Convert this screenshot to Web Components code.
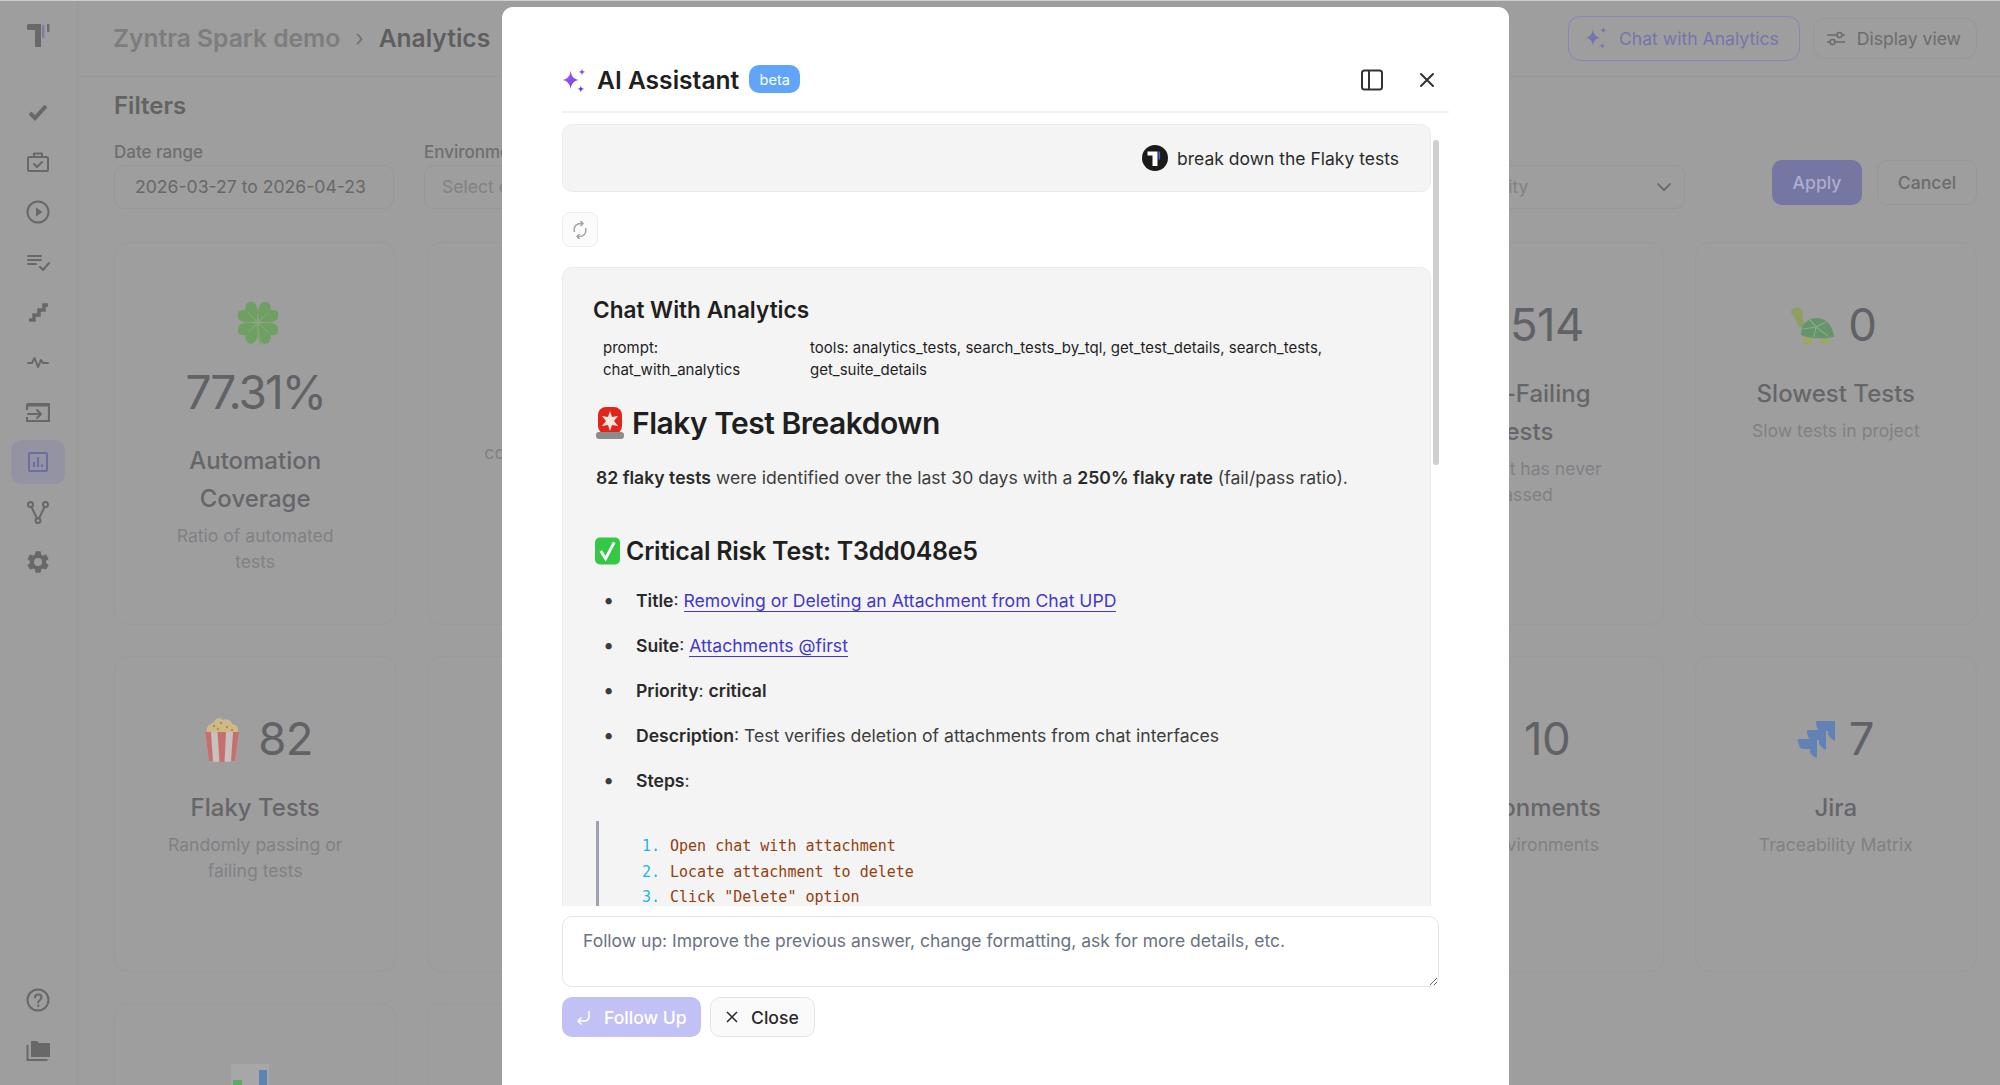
<!DOCTYPE html>
<html lang="en">
<head>
<meta charset="utf-8">
<title>Analytics</title>
<style>
    html, body { margin: 0; height: 100%; background: #9e9e9e; overflow: hidden; }
    body { font-family: Inter, "Liberation Sans", sans-serif; }
</style>
</head>
<body>
<app-shell>
    <side-rail slot="rail"></side-rail>
    <top-bar slot="top"></top-bar>
    <filter-bar slot="filters"></filter-bar>
    <stat-grid slot="content">
        <stat-card value="77.31%" stacked label="Automation Coverage" note="Ratio of automated tests">
            <svg slot="icon" style="margin-left:5px" width="40" height="43" viewBox="-16 -16.500 32 34.500">
                <g fill="#6f9f62">
                    <path d="M0 0C-3-3-9-6-9-12-9-17-3-18 0-13 3-18 9-17 9-12 9-6 3-3 0 0Z" transform="rotate(45) translate(0 -1)"/>
                    <path d="M0 0C-3-3-9-6-9-12-9-17-3-18 0-13 3-18 9-17 9-12 9-6 3-3 0 0Z" transform="rotate(135) translate(0 -1)"/>
                    <path d="M0 0C-3-3-9-6-9-12-9-17-3-18 0-13 3-18 9-17 9-12 9-6 3-3 0 0Z" transform="rotate(225) translate(0 -1)"/>
                    <path d="M0 0C-3-3-9-6-9-12-9-17-3-18 0-13 3-18 9-17 9-12 9-6 3-3 0 0Z" transform="rotate(315) translate(0 -1)"/>
                </g>
                <path d="M0 1C0 8 0 13 2.500 17.500" fill="none" stroke="#7fa86c" stroke-width="1.800" stroke-linecap="round"/>
                <path d="M-8-8 0 0 8-8M-8 8 0 0 8 8" fill="none" stroke="#88b277" stroke-width=".8"/>
            </svg>
        </stat-card>
        <stat-card note="covered by automation"></stat-card>
        <stat-card></stat-card>
        <stat-card></stat-card>
        <stat-card nudge value="514" label="Ever-Failing Tests" note="Test that has never passed">
            <svg slot="icon" width="40" height="40" viewBox="0 0 40 40"><circle cx="20" cy="20" r="17" fill="#a07070"/></svg>
        </stat-card>
        <stat-card nudge value="0" label="Slowest Tests" note="Slow tests in project">
            <svg slot="icon" width="44" height="37" viewBox="0 0 44 37">
                <ellipse cx="7" cy="5" rx="6" ry="4.500" fill="#8f9f62"/>
                <path d="M3 7 12 7 16 22 9 20Z" fill="#8f9f62"/>
                <rect x="13" y="26" width="9" height="11" rx="1.500" fill="#9aa768"/>
                <rect x="31" y="27" width="8" height="10" rx="1.500" fill="#9aa768"/>
                <path d="M11 28C11 16 19 11 27 11 37 11 43 20 44 30 33 32 20 32 11 28Z" fill="#67946c"/>
                <path d="M20 13 26 20 36 15M26 20 24 30M26 20 38 29M13 22 26 20" fill="none" stroke="#84ad85" stroke-width="1.200"/>
            </svg>
        </stat-card>
        <stat-card value="82" label="Flaky Tests" note="Randomly passing or failing tests">
            <svg slot="icon" style="margin:0 5px 0 8px" width="34" height="45" viewBox="0 0 34 45">
                <path d="M2 15C0 8 7 7 9 5 11 0 16 0 18 3 22 1 27 4 27 7 32 8 35 11 32 16Z" fill="#cdb98a"/>
                <g fill="#b7913f"><circle cx="9" cy="9" r="1.300"/><circle cx="16" cy="6" r="1.300"/><circle cx="22" cy="10" r="1.300"/><circle cx="27" cy="13" r="1.200"/><circle cx="13" cy="12" r="1.200"/></g>
                <path d="M0 15H34L30 44C27 45 7 45 4 44Z" fill="#c6c2bf"/>
                <path d="M0 15H6L8 44.600 4 44ZM12.500 15H21L19.500 45H14.500ZM28 15H34L30 44 26 44.600Z" fill="#c66f6f"/>
            </svg>
        </stat-card>
        <stat-card></stat-card>
        <stat-card></stat-card>
        <stat-card></stat-card>
        <stat-card nudge value="10" label="Environments" note="Test environments">
            <svg slot="icon" width="40" height="40" viewBox="0 0 40 40"><circle cx="20" cy="24" r="15" fill="#8e9fb0"/><path d="M33 8l5-2-2 5Z" fill="#c0a060"/></svg>
        </stat-card>
        <stat-card value="7" label="Jira" note="Traceability Matrix">
            <svg slot="icon" width="37" height="37" viewBox="0 0 37 37" fill="#6282b6">
                <path d="M18 0H37V20C37 20 32 18 30 13V10H23C20 10 18 6 18 0Z"/>
                <path d="M9 9H28V29C28 29 23 27 21 22V19H14C11 19 9 15 9 9Z"/>
                <path d="M0 18H19V37C19 37 14 36 12 31V28H5C2 28 0 24 0 18Z"/>
            </svg>
        </stat-card>
        <stat-card>
            <svg slot="icon" style="margin-right:10px" width="38" height="44" viewBox="0 0 38 44">
                <rect width="38" height="44" fill="#a7a7a7"/>
                <rect x="2" y="16" width="9" height="28" fill="#61a865"/>
                <rect x="28" y="6" width="8" height="38" fill="#5f83b5"/>
            </svg>
        </stat-card>
        <stat-card></stat-card>
    </stat-grid>
    <ai-modal slot="modal">
        <user-bubble>break down the Flaky tests</user-bubble>
        <retry-button></retry-button>
        <answer-card>
            <span slot="heading">Chat With Analytics</span>
            <span slot="prompt">prompt: chat_with_analytics</span>
            <span slot="tools">tools: analytics_tests, search_tests_by_tql, get_test_details, search_tests, get_suite_details</span>
            <flaky-report slot="report"></flaky-report>
        </answer-card>
    </ai-modal>
</app-shell>

<script>
const stroke = 'fill="none" stroke="currentColor" stroke-width="2" stroke-linecap="round" stroke-linejoin="round"';
const sparkle = 'M9 3C9.700 7.500 11.500 10.300 16 11 11.500 11.700 9.700 14.500 9 19 8.300 14.500 6.500 11.700 2 11 6.500 10.300 8.300 7.500 9 3Z'
    + 'M19 1C19.300 3 20 3.700 22 4 20 4.300 19.300 5 19 7 18.700 5 18 4.300 16 4 18 3.700 18.700 3 19 1Z'
    + 'M18 16C18.300 18 19 18.700 21 19 19 19.300 18.300 20 18 22 17.700 20 17 19.300 15 19 17 18.700 17.700 18 18 16Z';

class AppShell extends HTMLElement {
    constructor() {
        super();
        this.attachShadow({ mode: 'open' }).innerHTML = `
            <style>
                :host { display: flex; height: 100vh; overflow: hidden; position: relative; }
                main { flex: 1; min-width: 0; display: flex; flex-direction: column; }
                .rail { flex: none; }
                .body { flex: none; padding: 0 23px 0 36px; }
            </style>
            <div class="rail"><slot name="rail"></slot></div>
            <main>
                <slot name="top"></slot>
                <div class="body">
                    <slot name="filters"></slot>
                    <slot name="content"></slot>
                </div>
            </main>
            <slot name="modal"></slot>
        `;
    }
}

class SideRail extends HTMLElement {
    constructor() {
        super();
        const items = [
            `<path d="M4 13l5 5L20 6" fill="none" stroke="currentColor" stroke-width="4"/>`,
            `<g ${stroke}><rect x="2" y="7" width="20" height="14" rx="1.500"/><path d="M8 7V3.500h8V7M8 14l3 3 5-5"/></g>`,
            `<g ${stroke}><circle cx="12" cy="12" r="10.500"/></g><path d="M10 7.500 16.500 12 10 16.500Z" fill="currentColor"/>`,
            `<g ${stroke}><path d="M2 6h13M2 10h13M2 14h8M14 17l3 3 6-7"/></g>`,
            `<path d="M3 20h5v-5h5v-5h5V5h4" fill="none" stroke="currentColor" stroke-width="3.500"/>`,
            `<g ${stroke} stroke-width="1.600"><path d="M2 13h4l2.500-5 3.500 9 3-7 2 3h5"/></g>`,
            `<path d="M1 4h22v17H1v-4M1 10V4" fill="none" stroke="currentColor" stroke-width="2.200"/><path d="M1 5h22" stroke="currentColor" stroke-width="3"/><g ${stroke}><path d="M2 14h13M11 10l4 4-4 4"/></g>`,
            `<g fill="none" stroke="currentColor" stroke-width="2"><rect x="3" y="3" width="18" height="18" rx="1"/><path d="M8 17v-5M12 17V7M16 17v-2.500"/></g>`,
            `<g ${stroke}><circle cx="4.500" cy="4.500" r="2.500"/><circle cx="19.500" cy="4.500" r="2.500"/><circle cx="12" cy="20.500" r="2.500"/><path d="M5.500 7l5.500 11.500M18.500 7 13 18.500"/></g>`,
            `<path fill="currentColor" transform="translate(-1.400 -1.400) scale(1.120)" d="M19.140 12.940c.04-.3.06-.61.06-.94 0-.32-.02-.64-.07-.94l2.030-1.580a.49.49 0 0 0 .12-.61l-1.920-3.320a.488.488 0 0 0-.59-.22l-2.390.96c-.5-.38-1.030-.7-1.620-.94l-.36-2.540a.484.484 0 0 0-.48-.41h-3.840c-.24 0-.43.17-.47.41l-.36 2.540c-.59.24-1.130.57-1.620.94l-2.390-.96c-.22-.08-.47 0-.59.22L2.740 8.870c-.12.21-.08.47.12.61l2.030 1.580c-.05.3-.09.63-.09.94s.02.64.07.94l-2.030 1.580a.49.49 0 0 0-.12.61l1.920 3.320c.12.22.37.29.59.22l2.390-.96c.5.38 1.030.7 1.620.94l.36 2.540c.05.24.24.41.48.41h3.840c.24 0 .44-.17.47-.41l.36-2.540c.59-.24 1.130-.56 1.620-.94l2.390.96c.22.08.47 0 .59-.22l1.920-3.320c.12-.22.07-.47-.12-.61l-2.010-1.580zM12 15.600A3.600 3.600 0 1 1 12 8.400a3.600 3.600 0 0 1 0 7.200z"/>`
        ];
        const bottom = [
            `<g ${stroke}><circle cx="12" cy="12" r="10.500"/><path d="M9 9.500C9 5.500 15.500 5.500 15.500 9.500 15.500 12 12.200 12 12.200 14.500"/></g><circle cx="12.200" cy="17.800" r="1.200" fill="currentColor"/>`,
            `<path fill="currentColor" d="M5 3h6l2 2h11v14H5Z"/><path d="M1.500 7v15h20" fill="none" stroke="currentColor" stroke-width="2"/>`,
            `<circle cx="12" cy="12" r="12" fill="currentColor"/>`
        ];
        const render = (path, i) => `<div class="item ${i === 7 ? 'active' : ''}"><svg width="24" height="24" viewBox="0 0 24 24">${path}</svg></div>`;
        this.attachShadow({ mode: 'open' }).innerHTML = `
            <style>
                :host { display: flex; flex-direction: column; box-sizing: border-box; width: 78px; height: 1122px; border-right: 1px solid #999; color: #686868; }
                .logo { height: 90px; display: flex; justify-content: center; padding-top: 23px; box-sizing: border-box; margin-left: -1px; }
                .list { display: flex; flex-direction: column; gap: 6px; align-items: center; }
                .list.end { margin-top: auto; }
                .item { width: 54px; height: 44px; border-radius: 10px; display: flex; align-items: center; justify-content: center; margin-right: 1px; }
                .active { background: #9493a4; color: #6e6da0; }
            </style>
            <div class="logo">
                <svg width="24" height="26" viewBox="0 0 24 26">
                    <path d="M1 2.500Q1 1 2.500 1H15V24H9V7H2.500Q1 7 1 5.500Z" fill="#696969"/>
                    <rect x="16" y="2" width="2.500" height="13" fill="#7d7da8"/>
                    <rect x="21" y="1" width="2.500" height="8" fill="#6d6d6d"/>
                </svg>
            </div>
            <div class="list">${items.map(render).join('')}</div>
            <div class="list end">${bottom.map((p) => render(p, -1)).join('')}</div>
        `;
    }
}

class TopBar extends HTMLElement {
    constructor() {
        super();
        this.attachShadow({ mode: 'open' }).innerHTML = `
            <style>
                :host { display: flex; flex: none; align-items: center; box-sizing: border-box; height: 77px; padding: 0 23px 0 35px; border-bottom: 1px solid #999; }
                .crumb { font-size: 24.600px; font-weight: 600; color: #7d7d7d; white-space: nowrap; }
                .sep { margin: 0 15px; color: #747474; font-size: 22px; }
                .here { color: #5e5e5e; }
                .actions { margin-left: auto; display: flex; gap: 13px; align-items: center; }
                button { font: inherit; font-size: 17.6px; display: flex; align-items: center; background: none; border-radius: 12px; white-space: nowrap; }
                .chat { height: 45px; border: 1px solid #8686b6; color: #7575ad; padding: 0 20px 0 15px; gap: 11px; }
                .view { height: 41px; border: 1px solid #979797; color: #6c6c6c; padding: 0 15px 0 12px; gap: 11px; }
            </style>
            <span class="crumb">Zyntra Spark demo</span><span class="sep">›</span><span class="crumb here">Analytics</span>
            <div class="actions">
                <button class="chat"><svg width="24" height="24" viewBox="1 0 22 23"><path d="${sparkle}" fill="currentColor"/></svg>Chat with Analytics</button>
                <button class="view"><svg width="20" height="20" viewBox="0 0 20 20" fill="none" stroke="currentColor" stroke-width="1.500"><path d="M1 7h10M16 7h3M1 14h3M9 14h10"/><circle cx="13.500" cy="7" r="2.500"/><circle cx="6.500" cy="14" r="2.500"/></svg>Display view</button>
            </div>
        `;
    }
}

class FilterBar extends HTMLElement {
    constructor() {
        super();
        const caret = `<svg width="16" height="10" viewBox="0 0 16 10" fill="none" stroke="#636363" stroke-width="1.600"><path d="M1.500 1.500 8 8l6.500-6.500"/></svg>`;
        this.attachShadow({ mode: 'open' }).innerHTML = `
            <style>
                :host { display: block; color: #6c6c6c; }
                h2 { margin: 0; font-size: 24px; font-weight: 600; line-height: 30px; padding-top: 14px; color: #636363; }
                .row { display: flex; gap: 30px; align-items: flex-end; margin-top: 19px; height: 69px; }
                label { display: block; font-size: 17px; font-weight: 500; line-height: 24px; color: #6e6e6e; white-space: nowrap; }
                .field { width: 280px; flex: none; }
                .input { box-sizing: border-box; height: 44px; margin-top: 1px; padding: 0 20px; border: 1px solid #979797; border-radius: 10px; font-size: 17.6px; line-height: 42px; display: flex; align-items: center; justify-content: space-between; color: #686868; white-space: nowrap; }
                .ph { color: #828282; padding: 0 17px; }
                .end { padding: 0 12px 0 6px; }
                .gap { flex: 1; }
                .actions { display: flex; gap: 15px; margin-bottom: 4px; margin-left: 57px; }
                button { font: inherit; font-size: 17.6px; height: 45px; border-radius: 10px; box-sizing: border-box; }
                .apply { width: 90px; background: #7676a2; border: 0; color: #adadd0; font-weight: 500; }
                .cancel { width: 100px; background: none; border: 1px solid #979797; color: #6c6c6c; font-weight: 500; }
            </style>
            <h2>Filters</h2>
            <div class="row">
                <div class="field"><label>Date range</label><div class="input">2026-03-27 to 2026-04-23</div></div>
                <div class="field"><label>Environment</label><div class="input ph">Select environment</div></div>
                <div class="gap"></div>
                <div class="field"><label>Priority</label><div class="input ph end">Select priority ${caret}</div></div>
                <div class="actions"><button class="apply">Apply</button><button class="cancel">Cancel</button></div>
            </div>
        `;
    }
}

class StatGrid extends HTMLElement {
    constructor() {
        super();
        this.attachShadow({ mode: 'open' }).innerHTML = `
            <style>
                :host { display: grid; grid-template-columns: repeat(6, 1fr); grid-template-rows: 383px 316px 300px; gap: 31px; margin-top: 33px; }
            </style>
            <slot></slot>
        `;
    }
}

class StatCard extends HTMLElement {
    constructor() {
        super();
        const value = this.getAttribute('value') || '';
        const label = this.getAttribute('label') || '';
        const note = this.getAttribute('note') || '';
        const stacked = this.hasAttribute('stacked');
        const nudge = this.hasAttribute('nudge');
        this.attachShadow({ mode: 'open' }).innerHTML = `
            <style>
                :host { display: block; box-sizing: border-box; border: 1px solid #9a9a9a; border-radius: 14px; padding: 49px 48px 0; text-align: center; }
                .figure { display: flex; align-items: center; justify-content: center; gap: 14px; min-height: 66px; font-size: 45.500px; line-height: 66px; color: #616266; letter-spacing: -0.5px; }
                .figure.nudge { padding-right: 5px; }
                .figure.stacked { gap: 0; flex-direction: column; padding-top: 10px; letter-spacing: -2px; white-space: nowrap; font-size: 46px; }
                .figure.stacked span { margin-top: 14px; }
                .title { font-size: 24px; font-weight: 500; line-height: 38px; color: #65666a; margin-top: 17px; }
                .note { font-size: 17.6px; line-height: 26px; color: #808185; margin-top: 5px; }
                .note.only { margin-top: 82px; margin-left: 8px; white-space: nowrap; }
            </style>
            <div class="figure ${stacked ? 'stacked' : ''} ${nudge ? 'nudge' : ''}"><slot name="icon"></slot>${value ? `<span>${value}</span>` : ''}</div>
            ${label ? `<div class="title">${label}</div>` : ''}
            ${note ? `<div class="note ${label ? '' : 'only'}">${note}</div>` : ''}
        `;
    }
}

class AiModal extends HTMLElement {
    constructor() {
        super();
        this.attachShadow({ mode: 'open' }).innerHTML = `
            <style>
                :host { position: absolute; left: 502px; top: 7px; bottom: 0; width: 1007px; box-sizing: border-box; padding: 0 60px; background: #fff; border-radius: 11px 11px 0 0; display: flex; flex-direction: column; color: #1f1f1f; }
                .top-line { position: fixed; left: 0; right: 0; top: 0; height: 1px; background: #cfcfcf; }
                header { display: flex; align-items: center; height: 106px; box-sizing: border-box; padding-top: 42px; border-bottom: 2px solid #f0f0f0; flex: none; }
                h1 { margin: 0 0 0 11px; font-size: 24.600px; font-weight: 600; white-space: nowrap; }
                .beta { margin-left: 10px; height: 28px; width: 51px; margin-top: -2px; background: #60a5fa; color: #fff; border-radius: 10px; font-size: 14.5px; display: flex; align-items: center; justify-content: center; }
                .tools { margin-left: auto; display: flex; align-items: center; gap: 36px; padding-right: 14px; color: #333; }
                .scroll { position: relative; height: 782px; margin-top: 11px; overflow: hidden; flex: none; }
                .thumb { position: absolute; left: 871px; top: 16px; width: 6px; height: 325px; border-radius: 3px; background: #cfcfcf; }
                .items { width: 869px; display: flex; flex-direction: column; }
                textarea { display: block; box-sizing: border-box; margin-top: 10px; width: 877px; height: 71px; flex: none; padding: 12px 20px; border: 1px solid #e5e5e5; border-radius: 10px; font: 17.500px/24px Inter, sans-serif; color: #6b7280; outline: 0; }
                footer { display: flex; gap: 9px; margin-top: 10px; }
                button { font: inherit; font-size: 17.6px; height: 40px; border-radius: 10px; display: flex; align-items: center; gap: 11px; box-sizing: border-box; white-space: nowrap; }
                .send { width: 139px; padding: 0 13px 0 13px; background: #c2c1f6; border: 0; color: #fff; font-weight: 500; }
                .close { width: 105px; padding: 0 14px; background: #fafafa; border: 1px solid #e5e5e5; color: #2a2a2a; font-weight: 500; gap: 12px; }
            </style>
            <div class="top-line"></div>
            <header>
                <svg width="24" height="25" viewBox="1.500 0.500 21 22">
                    <defs><linearGradient id="spark" x1="0" y1="0" x2="1" y2="1"><stop offset="0" stop-color="#b765e8"/><stop offset="1" stop-color="#4f2cf5"/></linearGradient></defs>
                    <path d="${sparkle}" fill="url(#spark)"/>
                </svg>
                <h1>AI Assistant</h1><span class="beta">beta</span>
                <div class="tools">
                    <svg width="22" height="22" viewBox="0 0 22 22" fill="none" stroke="currentColor" stroke-width="2"><rect x="1" y="1.500" width="20" height="19" rx="2.500"/><path d="M8 1.500v19"/></svg>
                    <svg width="16" height="16" viewBox="0 0 16 16" fill="none" stroke="currentColor" stroke-width="2" stroke-linecap="round"><path d="M2 2l12 12M14 2 2 14"/></svg>
                </div>
            </header>
            <div class="scroll">
                <div class="items"><slot></slot></div>
                <div class="thumb"></div>
            </div>
            <textarea>Follow up: Improve the previous answer, change formatting, ask for more details, etc.</textarea>
            <footer>
                <button class="send"><svg width="18" height="18" viewBox="0 0 18 18" fill="none" stroke="currentColor" stroke-width="1.500"><path d="M14 3v5c0 3-1.500 5-4.500 5H3M6.500 9.500 3 13l3.500 3.500"/></svg>Follow Up</button>
                <button class="close"><svg width="14" height="14" viewBox="0 0 14 14" fill="none" stroke="currentColor" stroke-width="1.500"><path d="M2 2l10 10M12 2 2 12"/></svg>Close</button>
            </footer>
        `;
    }
}

class UserBubble extends HTMLElement {
    constructor() {
        super();
        this.attachShadow({ mode: 'open' }).innerHTML = `
            <style>
                :host { display: flex; align-items: center; justify-content: flex-end; gap: 9px; box-sizing: border-box; height: 68px; padding: 0 31px; background: #f4f4f4; border: 1px solid #ececec; border-radius: 10px; font-size: 17.500px; color: #2b2b2b; }
                svg { width: 26px; height: 26px; }
            </style>
            <svg viewBox="0 0 26 26">
                <circle cx="13" cy="13" r="13" fill="#1a1a1a"/>
                <path d="M5.500 6.500H15.500V21H10.500V10.500H5.500Z" fill="#fff"/>
                <rect x="16.500" y="6.500" width="1.600" height="8" fill="#4f5fe0"/>
            </svg>
            <span><slot></slot></span>
        `;
    }
}

class RetryButton extends HTMLElement {
    constructor() {
        super();
        this.attachShadow({ mode: 'open' }).innerHTML = `
            <style>
                :host { display: flex; align-items: center; justify-content: center; box-sizing: border-box; width: 36px; height: 35px; margin-top: 20px; border: 1px solid #eee; border-radius: 8px; background: #fbfbfb; color: #a3a3a3; }
            </style>
            <svg width="14" height="20" viewBox="0 0 14 20" fill="none" stroke="currentColor" stroke-width="1.500"><path d="M1.500 12C0 6 4 3 9 3.500M12.500 8C14 14 10 17 5 16.500"/><path d="M7.500 1 10 3.500 7.500 6M6.500 14 4 16.500 6.500 19"/></svg>
        `;
    }
}

class AnswerCard extends HTMLElement {
    constructor() {
        super();
        this.attachShadow({ mode: 'open' }).innerHTML = `
            <style>
                :host { display: block; box-sizing: border-box; margin-top: 20px; height: 660px; padding: 28px 30px 0; background: #f4f4f4; border: 1px solid #ececec; border-bottom: 0; border-radius: 10px 10px 0 0; }
                h3 { margin: 0; font-size: 22.600px; font-weight: 600; line-height: 28px; color: #1f1f1f; }
                .meta { display: flex; margin: 13px 0 0 10px; font-size: 15px; line-height: 22px; color: #1f1f1f; }
                .prompt { width: 207px; flex: none; padding-right: 50px; box-sizing: border-box; }
                .tools { width: 540px; }
            </style>
            <h3><slot name="heading"></slot></h3>
            <div class="meta"><div class="prompt"><slot name="prompt"></slot></div><div class="tools"><slot name="tools"></slot></div></div>
            <slot name="report"></slot>
        `;
    }
}

class FlakyReport extends HTMLElement {
    constructor() {
        super();
        const siren = `<svg width="30" height="34" viewBox="0 0 30 34">
            <rect x="3" y="1" width="24" height="27" rx="8" fill="#e0261c"/>
            <path d="M15 5l2 6 6-1-4 5 4 5-6-1-2 6-2-6-6 1 4-5-4-5 6 1Z" fill="#ffe7e0"/>
            <rect x="1" y="26" width="28" height="7" rx="3" fill="#8c8c8c"/>
        </svg>`;
        const check = `<svg width="25" height="28" viewBox="0 0 26 28">
            <rect width="26" height="28" rx="5" fill="#35c748"/>
            <path d="M6 14l5 8 9-17" fill="none" stroke="#fff" stroke-width="3"/>
        </svg>`;
        this.attachShadow({ mode: 'open' }).innerHTML = `
            <style>
                :host { display: block; margin-left: 3px; color: #3d3d3d; font-size: 17.6px; }
                h1, h2 { margin: 0; display: flex; align-items: center; color: #1f1f1f; font-weight: 600; white-space: nowrap; }
                h1 { margin-top: 22px; font-size: 30px; line-height: 40px; gap: 7px; letter-spacing: -0.5px; margin-left: -1px; }
                h2 { margin-top: 43px; font-size: 25px; line-height: 34px; gap: 6px; letter-spacing: -0.25px; margin-left: -1px; }
                p { margin: 22px 0 0; line-height: 26px; }
                b { font-weight: 600; color: #2a2a2a; }
                ul { margin: 20px 0 0; padding: 0 0 0 40px; list-style: none; display: flex; flex-direction: column; gap: 19px; }
                li { line-height: 26px; }
                li::before { content: "•"; display: inline-block; width: 33px; margin-left: -33px; font-size: 20px; line-height: 1; color: #3d3d3d; }
                a { color: #4338ca; text-decoration: none; border-bottom: 1px solid #4338ca; }
                blockquote { margin: 27px 0 0; padding: 13px 0 0 43px; border-left: 3px solid #9ca3af; height: 100px; font: 15px/25.500px "DejaVu Sans Mono", monospace; color: #92400e; }
                .line { display: flex; white-space: pre; }
                .line span { width: 28px; color: #1fb6e8; }
            </style>
            <h1>${siren}Flaky Test Breakdown</h1>
            <p><b>82 flaky tests</b> were identified over the last 30 days with a <b>250% flaky rate</b> (fail/pass ratio).</p>
            <h2>${check}Critical Risk Test: T3dd048e5</h2>
            <ul>
                <li><b>Title</b>: <a>Removing or Deleting an Attachment from Chat UPD</a></li>
                <li><b>Suite</b>: <a>Attachments @first</a></li>
                <li><b>Priority</b>: <b>critical</b></li>
                <li><b>Description</b>: Test verifies deletion of attachments from chat interfaces</li>
                <li><b>Steps</b>:</li>
            </ul>
            <blockquote>
                <div class="line"><span>1.</span>Open chat with attachment</div>
                <div class="line"><span>2.</span>Locate attachment to delete</div>
                <div class="line"><span>3.</span>Click "Delete" option</div>
            </blockquote>
        `;
    }
}

customElements.define('app-shell', AppShell);
customElements.define('side-rail', SideRail);
customElements.define('top-bar', TopBar);
customElements.define('filter-bar', FilterBar);
customElements.define('stat-grid', StatGrid);
customElements.define('stat-card', StatCard);
customElements.define('ai-modal', AiModal);
customElements.define('user-bubble', UserBubble);
customElements.define('retry-button', RetryButton);
customElements.define('answer-card', AnswerCard);
customElements.define('flaky-report', FlakyReport);
</script>
</body>
</html>
